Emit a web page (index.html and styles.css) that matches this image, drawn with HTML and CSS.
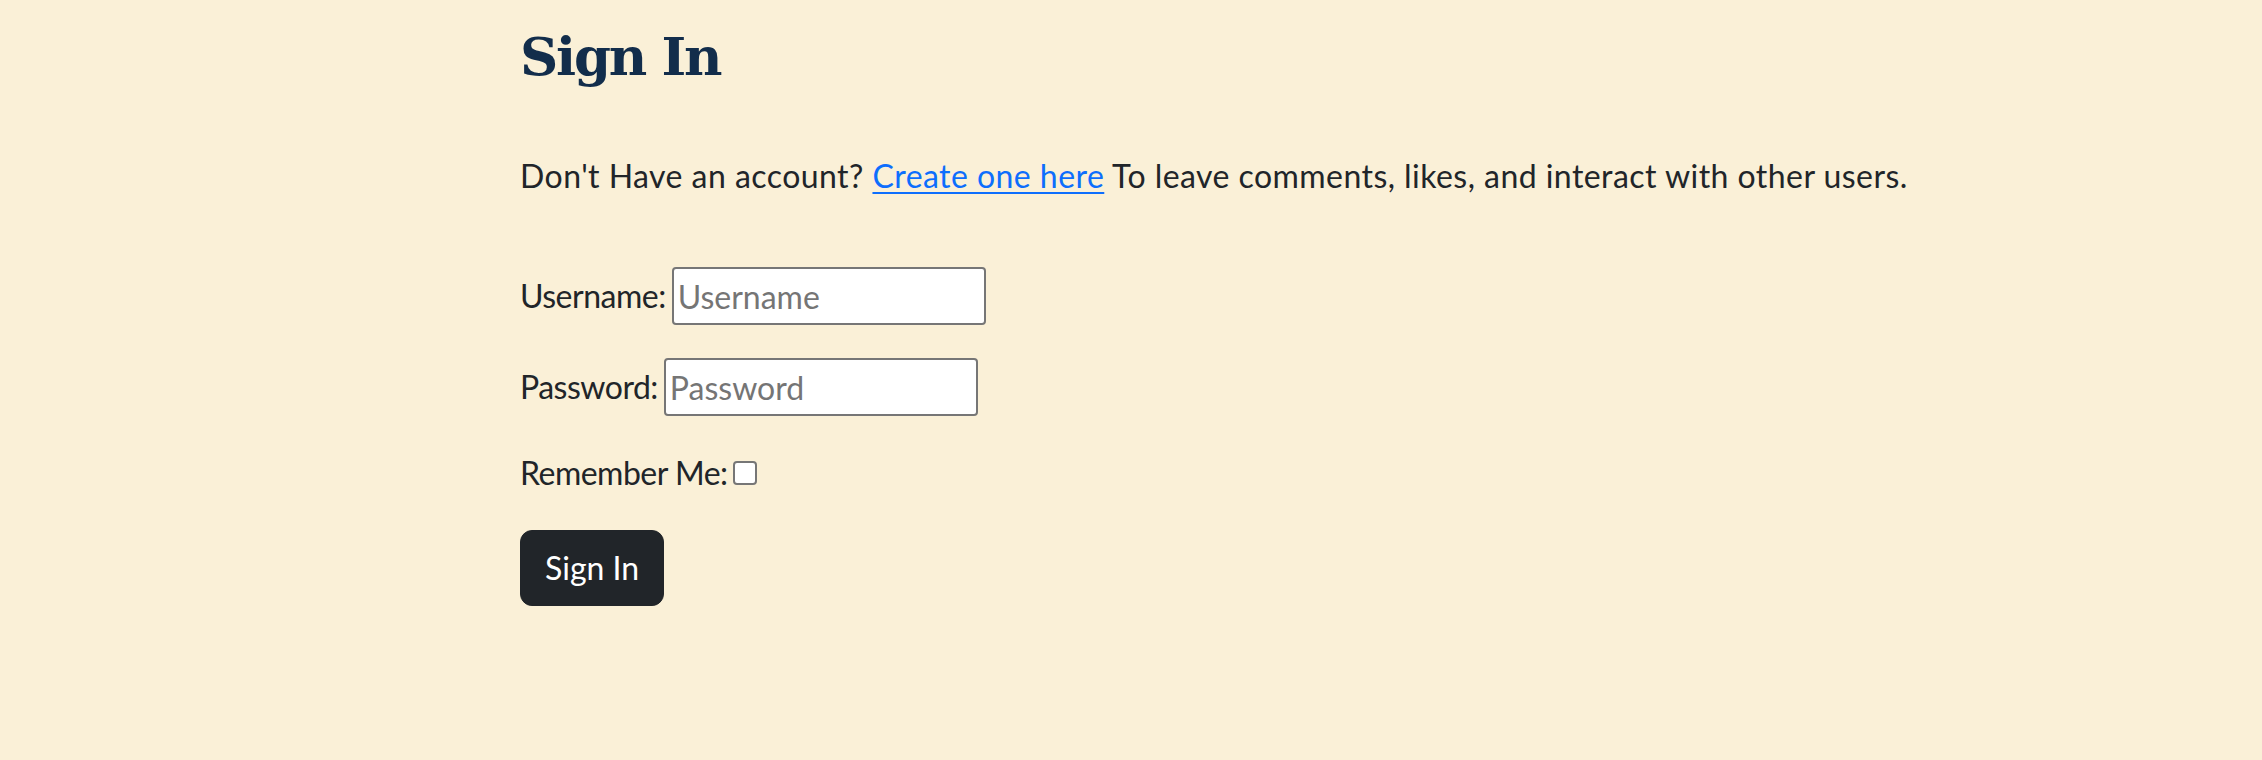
FILE: index.html
```html
<!DOCTYPE html>
<html lang="en">
<head>
<meta charset="utf-8">
<title>Sign In</title>
<link rel="stylesheet" href="styles.css">
</head>
<body>
<main class="page">
  <h1 class="title">Sign In</h1>
  <p class="intro">Don't Have an account? <a class="intro-link" href="#">Create one here</a> To leave comments, likes, and interact with other users.</p>
  <form class="login-form">
    <div class="field">
      <label class="field-label" for="id_login">Username:</label>
      <input class="text-input" id="id_login" type="text" placeholder="Username">
    </div>
    <div class="field">
      <label class="field-label" for="id_password">Password:</label>
      <input class="text-input" id="id_password" type="password" placeholder="Password">
    </div>
    <div class="field field-check">
      <label class="field-label" for="id_remember">Remember Me:</label>
      <input class="check-input" id="id_remember" type="checkbox">
    </div>
    <button class="btn-submit" type="submit">Sign In</button>
  </form>
</main>
</body>
</html>
```
FILE: styles.css
```css
html, body {
  margin: 0;
  padding: 0;
}
body {
  background: #faf0d7;
  color: #212529;
  font-family: Lato, "Open Sans", sans-serif;
  font-size: 32px;
  min-height: 760px;
}
.page {
  padding: 24px 0 0 520px;
}
.title {
  margin: 0;
  font-family: "DejaVu Serif", "Liberation Serif", serif;
  font-weight: 700;
  font-size: 53px;
  line-height: 64px;
  color: #122d4b;
  letter-spacing: -2.2px;
}
.intro {
  margin: 64px 0 0;
  line-height: 48px;
  white-space: nowrap;
  letter-spacing: 0.45px;
}
.intro-link {
  color: #0d6efd;
  text-decoration: underline;
  text-decoration-thickness: 2px;
  text-underline-offset: 4px;
}
.login-form {
  margin-top: 67px;
  display: flex;
  flex-direction: column;
  align-items: flex-start;
  gap: 33px;
}
.field {
  display: flex;
  align-items: center;
  gap: 6px;
  line-height: 48px;
}
.field-label {
  letter-spacing: -0.5px;
}
.field-check {
  gap: 5px;
}
.text-input {
  box-sizing: border-box;
  width: 314px;
  height: 58px;
  margin: 0;
  padding: 0 4px;
  border: 2px solid #767676;
  border-radius: 4px;
  background: #fff;
  font-family: Lato, "Open Sans", sans-serif;
  font-size: 32px;
  color: #212529;
}
.text-input::placeholder {
  color: #757575;
}
.check-input {
  appearance: none;
  -webkit-appearance: none;
  box-sizing: border-box;
  width: 24px;
  height: 24px;
  margin: 0;
  border: 2px solid #767676;
  border-radius: 4px;
  background: #fff;
}
.btn-submit {
  box-sizing: border-box;
  height: 76px;
  padding: 0 24px;
  border: 1px solid #212529;
  border-radius: 12px;
  background: #212529;
  color: #fff;
  font-family: Lato, "Open Sans", sans-serif;
  font-size: 32px;
  line-height: 48px;
}
```
